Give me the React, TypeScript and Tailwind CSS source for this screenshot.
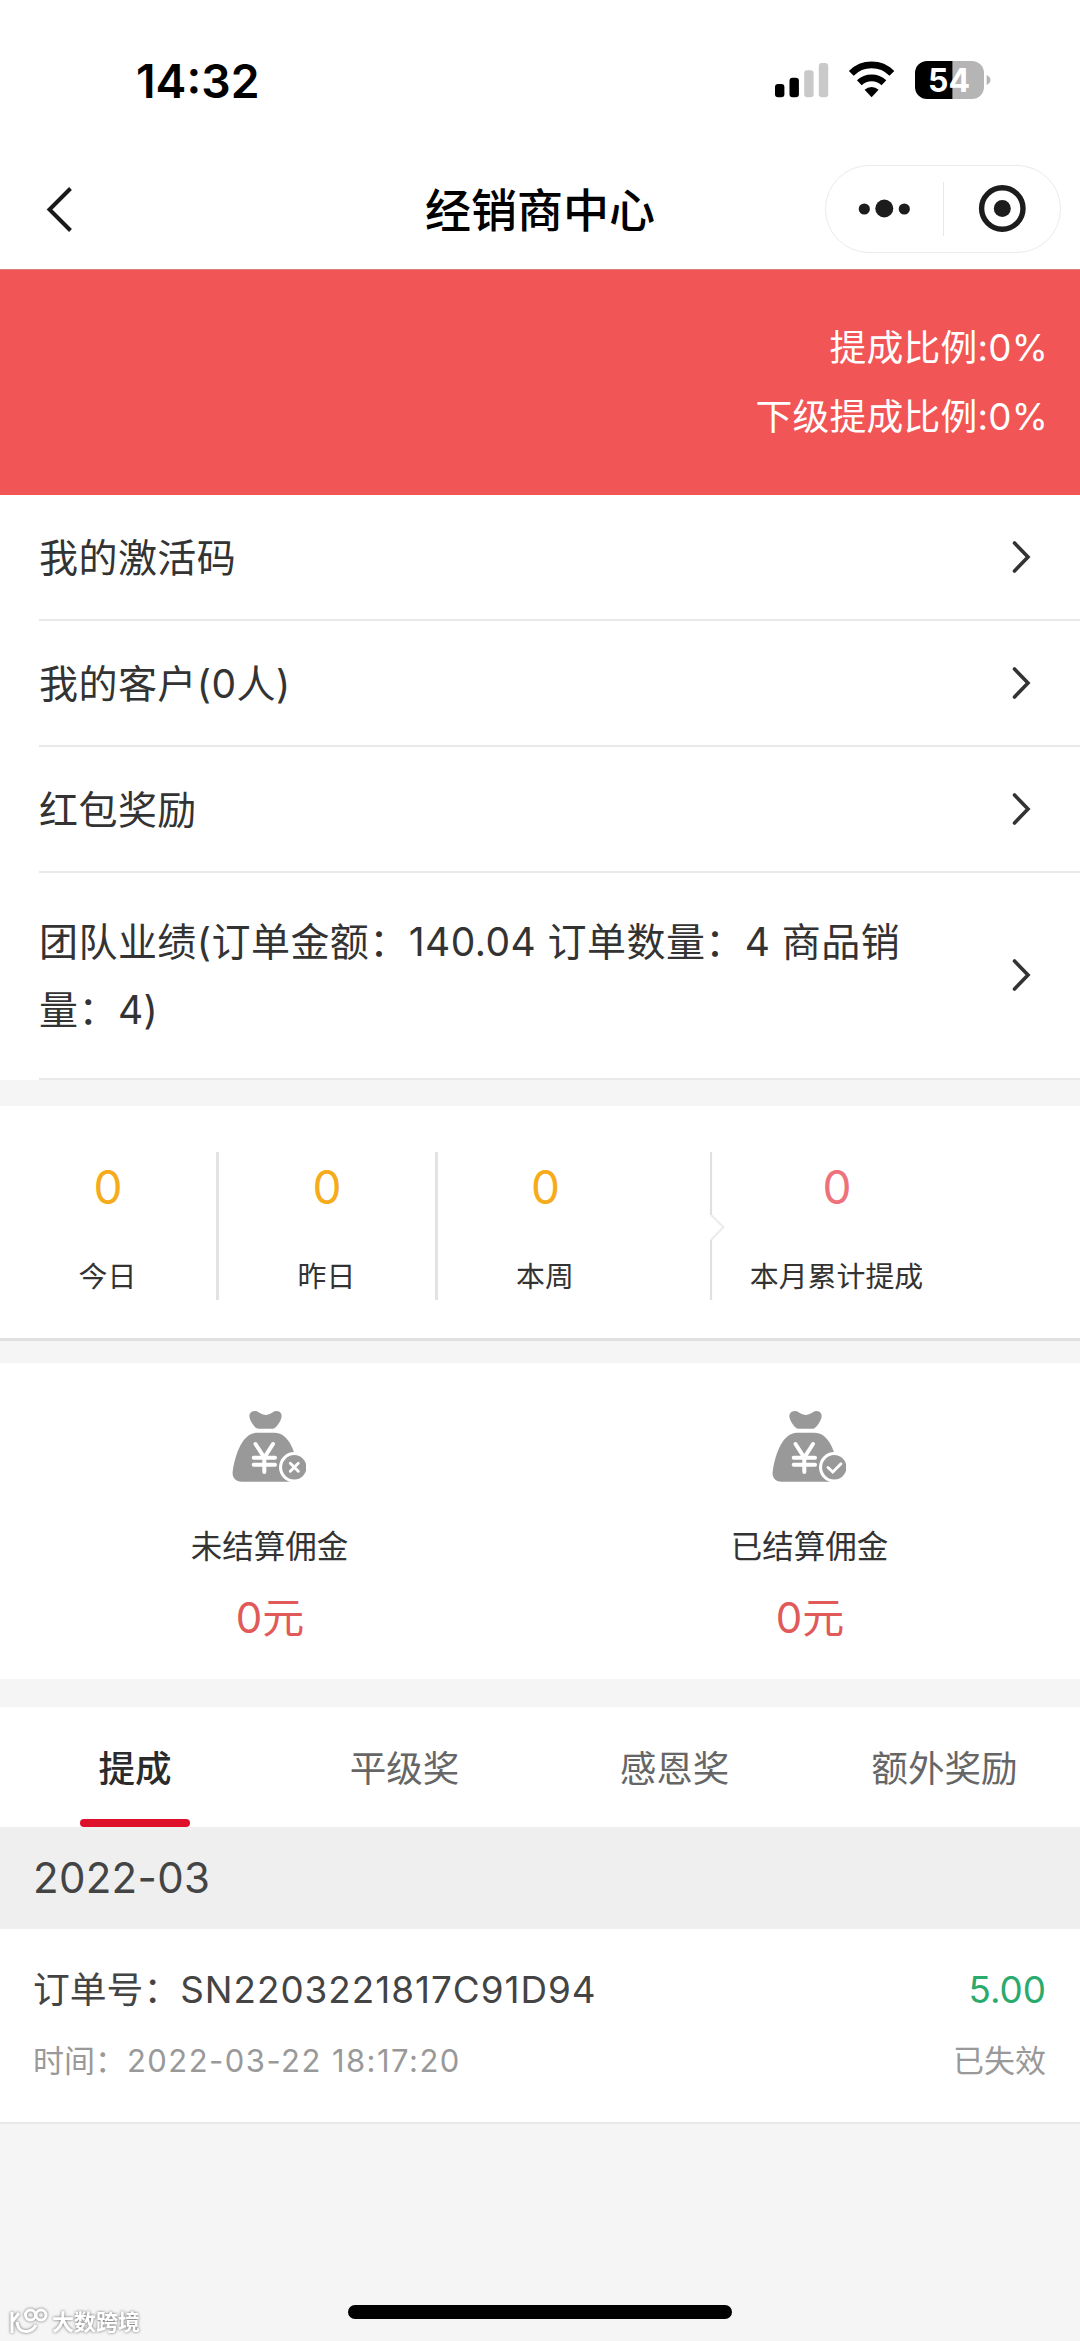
import type { ReactNode } from "react";
import clsx from "clsx";

const MENU = [
  { text: "我的激活码" },
  { text: "我的客户(0人)" },
  { text: "红包奖励" },
  { text: "团队业绩(订单金额：140.04 订单数量：4 商品销量：4)", tall: true },
];

const STATS = [
  { label: "今日", value: 0 },
  { label: "昨日", value: 0 },
  { label: "本周", value: 0 },
];

const TABS = ["提成", "平级奖", "感恩奖", "额外奖励"];

function StatusBar() {
  return (
    <div className="flex h-[160px] items-center justify-between pr-[89px] pl-[136px]">
      <span className="mt-px text-[46.3px] leading-[60px] font-semibold text-black">
        14:32
      </span>
      <svg width="217" height="40" viewBox="0 0 217 40">
        {/* signal */}
        <rect x="1" y="24" width="9.4" height="13.3" rx="3" fill="#000" />
        <rect x="15.5" y="17.7" width="9.4" height="19.6" rx="3" fill="#000" />
        <rect x="30.2" y="10.3" width="9.4" height="27" rx="3" fill="#c9c9c9" />
        <rect x="44.8" y="3" width="9.4" height="34.3" rx="3" fill="#c9c9c9" />
        {/* wifi */}
        <g fill="none" stroke="#000" strokeWidth="6.8">
          <path d="M77.3 13.4a28.6 28.6 0 0 1 40.6 0" />
          <path d="M85.3 22.8a17.6 17.6 0 0 1 24.6 0" />
        </g>
        <path d="M97.6 37.3l-7-7.6a10.3 10.3 0 0 1 14 0z" fill="#000" />
        {/* battery */}
        <path d="M178.5 1H198a12 12 0 0 1 12 12v14a12 12 0 0 1-12 12h-19.5z" fill="#b5b5b5" />
        <path d="M178.5 1H153a12 12 0 0 0-12 12v14a12 12 0 0 0 12 12h25.5z" fill="#000" />
        <path d="M212.6 15c2.6 1.4 3.9 3 3.9 5s-1.3 3.6-3.9 5z" fill="#b5b5b5" />
        <text x="175" y="32" textAnchor="middle" fontSize="32" fontWeight="700" fill="#fff">
          54
        </text>
      </svg>
    </div>
  );
}

function NavBar() {
  return (
    <div className="grid h-[109px] grid-cols-[1fr_auto_1fr] items-start pr-[19px] pl-[19px]">
      <svg width="54" height="98" viewBox="0 0 54 98" fill="none">
        <path d="M51.5 28.5L30.5 49.5l21 21" stroke="#1a1a1a" strokeWidth="4" />
      </svg>
      <h1 className="text-[46px] leading-[100px] font-medium text-black">经销商中心</h1>
      <div className="mt-[5px] flex h-[88px] w-[236px] items-center justify-self-end rounded-full border border-[#ebebeb]">
        <svg width="117" height="86" viewBox="0 0 117 86" fill="#1c1c1c">
          <circle cx="38.3" cy="43" r="5.6" />
          <circle cx="58.3" cy="42.5" r="9" />
          <circle cx="78.3" cy="43" r="5.6" />
        </svg>
        <div className="h-[54px] w-px bg-[#e8e8e8]" />
        <svg width="116" height="86" viewBox="0 0 116 86">
          <circle cx="58.3" cy="42.5" r="20.7" fill="none" stroke="#1c1c1c" strokeWidth="5.4" />
          <circle cx="58.3" cy="42.5" r="8.5" fill="#1c1c1c" />
        </svg>
      </div>
    </div>
  );
}

function MenuRow({ tall, children }: { tall?: boolean; children: ReactNode }) {
  return (
    <div className="ml-[39px] flex items-center justify-between border-b-2 border-[#e9e9e9] pr-[48px]">
      <p
        className={clsx(
          "w-[890px] text-[39px] leading-[68px] tracking-[0.45px] text-[#333]",
          tall ? "pt-[35px] pb-[34px]" : "pt-[29px] pb-[27px]",
        )}
      >
        {children}
      </p>
      <svg width="20" height="34" viewBox="0 0 20 34" fill="none" className="mb-px">
        <path
          d="M2.5 3L16 17 2.5 31"
          stroke="#333"
          strokeWidth="3.6"
          strokeLinecap="round"
        />
      </svg>
    </div>
  );
}

function Stat({ label, value, className }: { label: string; value: number; className: string }) {
  return (
    <div className={clsx("flex h-[148px] flex-col items-center", className)}>
      <span className="text-[46px] leading-[70px]">{value}</span>
      <span className="mt-[35px] mr-px text-[28.9px] leading-[40px] text-[#333]">{label}</span>
    </div>
  );
}

function MoneyBag({ settled }: { settled: boolean }) {
  return (
    <svg width="76" height="74" viewBox="0 0 76 74" fill="none" className="mr-[4px]">
      <path
        d="M20 3.5c2.5-3 6-3 9-1 5 3.3 8.5 3.3 13.5 0 3-2 6.5-2 8.5 1 1.8 3-.5 7.5-3 11-1.7 2.5-3.5 4.2-5.5 4.2h-14c-2 0-4-1.7-5.5-4.2-2.5-3.5-4.8-8-3-11z"
        fill="#999"
      />
      <path
        d="M27 22.7h17.5c13 0 20.2 16 22.5 32.5 1 9-2 16.5-9 16.5H11.5c-6 0-10-4.5-8.7-11C5.5 43 13 22.700 27 22.700z"
        fill="#999"
      />
      <path
        d="M25.5 34L34.3 47.5l8.7-13.5M34.3 47v15M23.7 47.7h21.3M23.7 54.7h21.3"
        stroke="#fff"
        strokeWidth="4"
        strokeLinecap="round"
      />
      <circle cx="64.3" cy="57.3" r="15.3" fill="#fff" />
      <circle cx="64.3" cy="57.3" r="12.2" fill="#999" />
      <path
        d={settled ? "M58 57.5l4.8 4.5 8.2-8.3" : "M60.3 53.3l8 8M68.3 53.3l-8 8"}
        stroke="#fff"
        strokeWidth="2.9"
        strokeLinecap="round"
      />
    </svg>
  );
}

function Commission({ label, settled }: { label: string; settled: boolean }) {
  return (
    <div className="flex flex-1 flex-col items-center pt-[47px]">
      <MoneyBag settled={settled} />
      <span className="mt-[38px] mr-px text-[31.5px] leading-[50px] text-[#333]">{label}</span>
      <span className="mt-[16px] text-[42px] leading-[60px] text-[#e05a5a]">0元</span>
    </div>
  );
}

export default function App() {
  return (
    <div className="flex h-[2341px] w-[1080px] flex-col overflow-hidden bg-[#f5f5f5] font-[Inter,'Noto_Sans_CJK_SC',sans-serif]">
      <div className="bg-white">
        <StatusBar />
        <NavBar />
      </div>

      <div className="h-[226px] border-t border-[#d9807d] bg-[#f25555] pt-[43px] pr-[32px] text-right text-[36.8px] leading-[69px] tracking-[0.2px] text-white">
        <p>提成比例:0%</p>
        <p>下级提成比例:0%</p>
      </div>

      <div className="h-[585px] bg-white">
        {MENU.map((item) => (
          <MenuRow key={item.text} tall={item.tall}>
            {item.text}
          </MenuRow>
        ))}
      </div>

      <div className="mt-[26px] flex h-[235px] border-b-[3px] border-[#e0e0e0] bg-white pt-[46px]">
        {STATS.map((s, i) => (
          <Stat
            key={s.label}
            {...s}
            className={clsx(
              "text-[#f5ab1a]",
              i < 2 ? "w-[219px] border-r-[3px] border-[#e3e3e3]" : "w-[215px]",
            )}
          />
        ))}
        <svg width="17" height="148" viewBox="0 0 17 148" fill="none" className="ml-[56px]">
          <path d="M2 0v63M2 88v60" stroke="#e0e0e0" strokeWidth="2.2" />
          <path d="M2 63l12.5 12L2 88" stroke="#ececec" strokeWidth="2.2" />
        </svg>
        <Stat label="本月累计提成" value={0} className="w-[222px] text-[#ee727b]" />
      </div>

      <div className="mt-[22px] flex h-[316px] bg-white">
        <Commission label="未结算佣金" settled={false} />
        <Commission label="已结算佣金" settled />
      </div>

      <div className="mt-[28px] grid h-[120px] grid-cols-4 bg-white">
        {TABS.map((tab, i) => (
          <div
            key={tab}
            className={clsx(
              "flex flex-col items-center pt-[32px] text-[36.6px] leading-[60px]",
              i === 0 ? "font-medium text-[#2b2b2b]" : "pr-px text-[#666]",
            )}
          >
            {tab}
            {i === 0 && <span className="mt-[20px] h-[8px] w-[110px] rounded-full bg-[#de0f2b]" />}
          </div>
        ))}
      </div>

      <div className="h-[102px] bg-[#efefef] pl-[33px] text-[42px] leading-[102px] tracking-[0.3px] text-[#444]">
        2022-03
      </div>

      <div className="h-[195px] border-b-2 border-[#e8e8e8] bg-white pt-[30px] pr-[34px] pl-[33px]">
        <div className="flex justify-between text-[36.8px] leading-[62px] text-[#444]">
          <span>
            订单号：<span className="tracking-[1px]">SN2203221817C91D94</span>
          </span>
          <span className="text-[#2aaa6c]">5.00</span>
        </div>
        <div className="mt-[10px] flex justify-between text-[31px] leading-[60px] text-[#999]">
          <span>
            时间：<span className="ml-px tracking-[1.45px]">2022-03-22 18:17:20</span>
          </span>
          <span>已失效</span>
        </div>
      </div>

      {/* bottom: watermark + home indicator */}
      <div className="relative mt-auto h-[50px]">
        <div className="mx-auto mt-[14px] h-[14px] w-[384px] rounded-full bg-black" />
        <div className="absolute bottom-[6px] left-[8px] flex items-end gap-[4px] drop-shadow-[0_0_1.5px_#666]">
          <svg width="40" height="28" viewBox="0 0 40 28" fill="none" stroke="#fff" strokeWidth="3">
            <path d="M4 5v21M4 15l7-9M9 15c1 12 14 12 19 3" />
            <circle cx="22.5" cy="8" r="5" />
            <circle cx="33" cy="8" r="5" />
          </svg>
          <span className="text-[22px] leading-[26px] font-bold text-white">大数跨境</span>
        </div>
      </div>
    </div>
  );
}
